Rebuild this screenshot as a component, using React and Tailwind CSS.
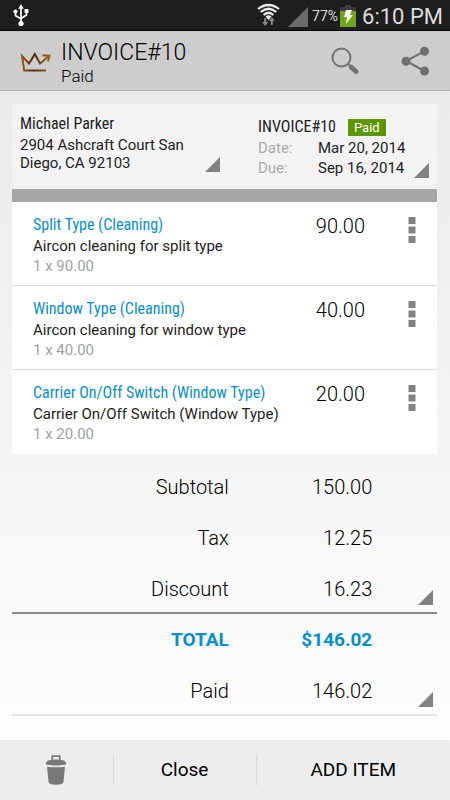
import clsx from 'clsx';

const items = [
  { name: 'Split Type (Cleaning)', description: 'Aircon cleaning for split type', qty: '1 x 90.00', price: '90.00' },
  { name: 'Window Type (Cleaning)', description: 'Aircon cleaning for window type', qty: '1 x 40.00', price: '40.00' },
  { name: 'Carrier On/Off Switch (Window Type)', description: 'Carrier On/Off Switch (Window Type)', qty: '1 x 20.00', price: '20.00' },
];

const totals = [
  { label: 'Subtotal', value: '150.00' },
  { label: 'Tax', value: '12.25' },
  { label: 'Discount', value: '16.23', editable: true },
  { label: 'TOTAL', value: '$146.02', total: true },
  { label: 'Paid', value: '146.02', editable: true },
];

function Corner() {
  return (
    <svg width="15" height="15" viewBox="0 0 15 15" className="block" aria-hidden="true">
      <path d="M15 0V15H0z" fill="#828282" />
    </svg>
  );
}

function UsbIcon() {
  return (
    <svg width="16" height="24" viewBox="0 0 16 24" fill="none" stroke="#fff" strokeWidth="1.7" aria-hidden="true">
      <path d="M8 4v16M2.500 8v4.500L8 16M13.500 7v5L8 15.500" />
      <circle cx="8" cy="20.500" r="2.600" fill="#fff" stroke="none" />
      <path d="M8 1l2.800 4.800H5.200z" fill="#fff" stroke="none" />
      <circle cx="2.500" cy="8.500" r="2.100" fill="#fff" stroke="none" />
      <path d="M11.500 6h4v4h-4z" fill="#fff" stroke="none" />
    </svg>
  );
}

function WifiIcon() {
  return (
    <svg width="23" height="24" viewBox="0 0 23 24" fill="none" aria-hidden="true">
      <g stroke="#ececec" strokeWidth="2.200">
        <path d="M1 6Q11.500 -2 22 6" />
        <path d="M3.700 9Q11.500 2.500 19.300 9" />
        <path d="M6.600 12Q11.500 7.500 16.400 12" />
      </g>
      <path d="M8.500 13.500Q11.500 11 14.500 13.500L11.500 17z" fill="#ececec" />
      <path d="M7.200 15v4H5.200l3 4 3-4H9.200v-4zM13.800 22v-4h-2l3-4 3 4h-2v4z" fill="#8a8a8a" />
    </svg>
  );
}

function BatteryIcon() {
  return (
    <svg width="16" height="24" viewBox="0 0 16 24" aria-hidden="true">
      <path d="M5 1h6v2h5v4H0V3h5z" fill="#3c3c3c" />
      <path d="M0 7h16v16H0z" fill="#72a616" />
      <path d="M6 6h6l-2 5h3L6 20l1-7H4z" fill="#f2f2f2" />
    </svg>
  );
}

function CrownIcon() {
  return (
    <svg width="31" height="22" viewBox="0 0 31 22" fill="none" strokeWidth="2" aria-hidden="true">
      <defs>
        <linearGradient id="crown" x1="0" y1="0" x2="31" y2="0" gradientUnits="userSpaceOnUse">
          <stop offset="0" stopColor="#9a6412" />
          <stop offset="0.45" stopColor="#4d2a12" />
          <stop offset="0.7" stopColor="#7a4a12" />
          <stop offset="1" stopColor="#a06a14" />
        </linearGradient>
      </defs>
      <path d="M26 20.500H4.200L2 6L9 13.500L14.800 4L20 13.500L29 6" stroke="url(#crown)" />
      <path d="M22.500 5.500H29.500L28 11.500" stroke="url(#crown)" />
    </svg>
  );
}

function SearchIcon() {
  return (
    <svg width="30" height="30" viewBox="0 0 30 30" fill="none" stroke="#727272" aria-hidden="true">
      <circle cx="11.500" cy="11.500" r="9" strokeWidth="2" />
      <path d="M17.500 17.500l4 4" strokeWidth="2.200" />
      <path d="M21.500 21.500l4.500 4" strokeWidth="5" strokeLinecap="round" />
    </svg>
  );
}

function ShareIcon() {
  return (
    <svg width="30" height="30" viewBox="0 0 30 30" fill="#6f6f6f" aria-hidden="true">
      <path d="M24.500 5.200L6 15l18.500 10" fill="none" stroke="#6f6f6f" strokeWidth="2" />
      <circle cx="24.500" cy="5.200" r="4.500" />
      <circle cx="6" cy="15.200" r="4.500" />
      <circle cx="24.500" cy="25" r="4.500" />
    </svg>
  );
}

function TrashIcon() {
  return (
    <svg width="22" height="30" viewBox="0 0 22 30" fill="#787878" aria-hidden="true">
      <path d="M7.200 5V1.200h7.600V5" fill="none" stroke="#787878" strokeWidth="1.700" />
      <path d="M1 9.500V7.500Q2 4.500 11 4.500T21 7.500V9.500Q17 10.500 11 10.500T1 9.500z" />
      <path d="M2 11.700Q11 13 20 11.700L18.500 27Q18 29.700 11 29.700T3.500 27z" />
    </svg>
  );
}

function StatusBar() {
  return (
    <div className="flex h-[31px] items-center justify-between border-b border-black bg-[#1e1e1e] pr-[7px] pl-[13px] text-[#dcdcdc]">
      <UsbIcon />
      <div className="flex items-center">
        <WifiIcon />
        <svg width="20" height="20" viewBox="0 0 20 20" className="mt-1 ml-2" aria-hidden="true">
          <path d="M20 0V20H0z" fill="#6b6b6b" />
        </svg>
        <span className="ml-1 pt-0.5 text-sm">77%</span>
        <span className="ml-0.5 pt-0.5"><BatteryIcon /></span>
        <span className="ml-1.5 pt-1 text-[22px] leading-7">6:10 PM</span>
      </div>
    </div>
  );
}

export default function App() {
  return (
    <div className="flex min-h-screen flex-col bg-linear-to-b from-[#e8e8e8] to-white font-['Roboto',sans-serif] text-[#222]">
      <StatusBar />

      <header className="flex h-[60px] items-center justify-between border-b border-[#b5b5b5] bg-[#cdcdcd] px-5 text-black">
        <div className="flex items-center gap-2.5">
          <CrownIcon />
          <div className="pt-1">
            <h1 className="text-[23px] leading-[26px] font-light">INVOICE#10</h1>
            <p className="text-[17px] leading-5 font-light">Paid</p>
          </div>
        </div>
        <div className="flex gap-10">
          <button type="button" aria-label="Search"><SearchIcon /></button>
          <button type="button" aria-label="Share"><ShareIcon /></button>
        </div>
      </header>

      <main className="flex-1 pt-[13px] pr-[13px] pl-3">
        <section className="flex h-[98px] justify-between border-b-[13px] border-[#a6a6a6] bg-[#f3f3f3]">
          <div className="flex items-end pb-[17px] pl-2">
            <div className="w-[185px] self-start pt-2.5">
              <h2 className="font-['Roboto_Condensed','Roboto',sans-serif] text-base leading-5">Michael Parker</h2>
              <p className="mt-0.5 text-[15px] leading-[18px]">2904 Ashcraft Court San Diego, CA 92103</p>
            </div>
            <button type="button" aria-label="Edit client"><Corner /></button>
          </div>
          <div className="flex items-end pr-2 pb-[11px]">
            <div className="w-[156px] self-start pt-3">
              <div className="flex items-center gap-3">
                <h2 className="font-['Roboto_Condensed','Roboto',sans-serif] text-base leading-[22px]">INVOICE#10</h2>
                <span className="bg-[#5c9600] px-1.5 text-[13px] leading-[17px] text-white">Paid</span>
              </div>
              <dl className="grid grid-cols-[60px_1fr] text-[15px] leading-5">
                <dt className="text-[#aaa]">Date:</dt>
                <dd>Mar 20, 2014</dd>
                <dt className="text-[#aaa]">Due:</dt>
                <dd>Sep 16, 2014</dd>
              </dl>
            </div>
            <button type="button" aria-label="Edit invoice"><Corner /></button>
          </div>
        </section>

        <ul className="divide-y divide-[#dcdcdc] bg-white">
          {items.map(item => (
            <li key={item.name} className="flex h-[84px] items-start px-[21px] pt-3">
              <div className="flex-1">
                <h3 className="font-['Roboto_Condensed','Roboto',sans-serif] text-base leading-[22px] text-[#0590cb]">{item.name}</h3>
                <p className="text-[15px] leading-5">{item.description}</p>
                <p className="text-[15px] leading-5 text-[#a0a0a0]">{item.qty}</p>
              </div>
              <span className="text-xl leading-6 font-light text-black">{item.price}</span>
              <button type="button" aria-label={`Options for ${item.name}`} className="mt-[3px] ml-[43px]">
                <svg width="8" height="26" viewBox="0 0 8 26" fill="#828282" aria-hidden="true">
                  <path d="M0.500 0h7v7h-7zM0.500 9.500h7v7h-7zM0.500 19h7v7h-7z" />
                </svg>
              </button>
            </li>
          ))}
        </ul>

        <table className="mt-1.5 w-full border-collapse text-xl font-light">
          <tbody>
            {totals.map(row => (
              <tr
                key={row.label}
                className={clsx(
                  'h-[51px]',
                  row.total ? 'border-t-2 border-[#8a8a8a] text-[19px] font-bold text-[#0590cb]' : 'border-[#e2e2e2] text-black',
                  row.label === 'Paid' && 'border-b-2'
                )}
              >
                <th scope="row" className={clsx('w-[51%] p-0 pt-[3px] text-right', row.total ? 'font-bold' : 'font-light')}>{row.label}</th>
                <td className="w-[34%] p-0 pt-[3px] pr-px text-right">{row.value}</td>
                <td className="p-0 pr-1 pb-[7px] align-bottom">
                  {row.editable && (
                    <button type="button" aria-label={`Edit ${row.label}`} className="ml-auto block"><Corner /></button>
                  )}
                </td>
              </tr>
            ))}
          </tbody>
        </table>
      </main>

      <footer className="flex h-[60px] items-center bg-[#ededed] text-[19px] text-black">
        <button type="button" aria-label="Delete" className="flex w-1/4 justify-center"><TrashIcon /></button>
        <button type="button" className="h-[30px] w-[32%] border-x border-[#d8d8d8]">Close</button>
        <button type="button" className="flex-1">ADD ITEM</button>
      </footer>
    </div>
  );
}
